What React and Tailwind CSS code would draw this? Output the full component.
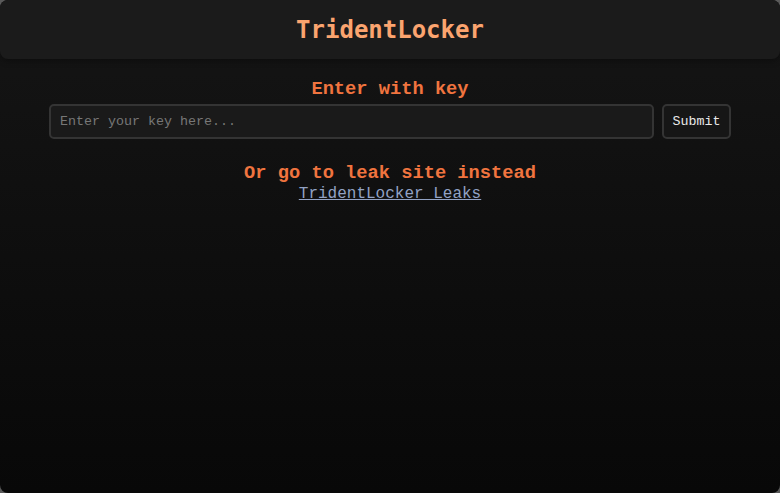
import React from 'react';

const App = () => {
    return (
        <div className="w-[780px] h-[493px] bg-[#5a5a5a]">
            <div className="w-full h-full rounded-[8px] overflow-hidden bg-gradient-to-b from-[#151515] to-[#080808] flex flex-col font-['Liberation_Mono',monospace]">
                <header className="h-[59px] shrink-0 bg-[#1b1b1b] rounded-b-[8px] shadow-[0_2px_6px_rgba(0,0,0,0.35)] flex items-center justify-center">
                    <h1 className="text-[24px] font-bold text-[#fba46f] font-['DejaVu_Sans_Mono',monospace]">
                        TridentLocker
                    </h1>
                </header>

                <main className="px-[49px] pt-[18px] flex flex-col items-center">
                    <h3 className="text-[18.72px] font-bold leading-[24px] text-[#f0743f]">Enter with key</h3>
                    <div className="w-full flex gap-2 mt-[3px]">
                        <input
                            type="text"
                            placeholder="Enter your key here..."
                            className="flex-1 h-[35px] px-[9px] bg-[#1a1a1a] border-2 border-[#343434] rounded-[5px] text-[13.33px] text-[#ddd] placeholder:text-[#777] outline-none font-['Liberation_Mono',monospace]"
                        />
                        <button className="w-[69px] h-[35px] bg-[#161616] border-2 border-[#343434] rounded-[5px] text-[13.33px] text-[#e8e8e8] font-['Liberation_Mono',monospace]">
                            Submit
                        </button>
                    </div>

                    <h3 className="mt-[22px] text-[18.72px] font-bold leading-[24px] text-[#f0743f]">Or go to leak site instead</h3>
                    <a href="#" className="text-[16px] leading-[18px] text-[#92a2c4] underline">
                        TridentLocker Leaks
                    </a>
                </main>
            </div>
        </div>
    );
};

export default App;
